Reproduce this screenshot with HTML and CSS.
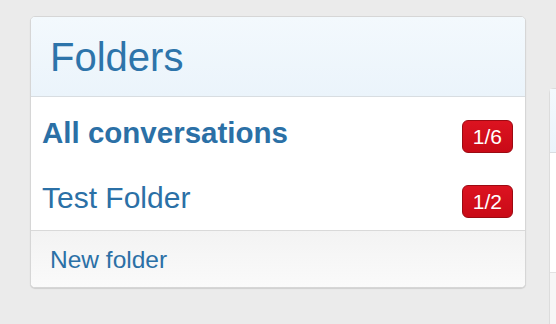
FILE: index.html
```html
<!DOCTYPE html>
<html>
<head>
<meta charset="utf-8">
<link rel="stylesheet" href="styles.css">
</head>
<body>
<div class="page">
  <div class="card">
    <div class="card-head"><h2 class="title">Folders</h2></div>
    <ul class="folders">
      <li class="folder"><span class="name bold">All conversations</span><span class="badge">1/6</span></li>
      <li class="folder"><span class="name">Test Folder</span><span class="badge">1/2</span></li>
    </ul>
    <div class="card-foot"><a class="new">New folder</a></div>
  </div>
  <div class="side">
    <div class="side-head"></div>
    <div class="side-body"></div>
    <div class="side-foot"></div>
  </div>
</div>
</body>
</html>
```

FILE: styles.css
```css
html, body {
  margin: 0;
  padding: 0;
  background: #ebebeb;
  overflow: hidden;
  font-family: "Liberation Sans", Arial, sans-serif;
}
.page {
  display: flex;
  align-items: flex-start;
  gap: 23px;
  padding: 16px 0 0 30px;
  width: 526px;
}
.card {
  width: 494px;
  flex: none;
  background: #fff;
  border: 1px solid #d6d6d6;
  border-radius: 5px;
  box-shadow: 0 1px 1px rgba(0,0,0,0.12);
  overflow: hidden;
}
.card-head {
  background: linear-gradient(#f3f9fd, #ebf4fb);
  border-bottom: 1px solid #d8dde1;
  padding: 16px 19px 15px;
}
.title {
  margin: 0;
  font-weight: normal;
  font-size: 40px;
  line-height: 48px;
  color: #2d74aa;
}
.folders {
  list-style: none;
  margin: 0;
  padding: 3px 0 0;
}
.folder {
  display: flex;
  align-items: center;
  justify-content: space-between;
  padding: 16px 12px 15px 11px;
}
.name {
  font-size: 30px;
  line-height: 34px;
  color: #2b70a6;
}
.name.bold {
  font-weight: bold;
  font-size: 29.5px;
}
.badge {
  margin: 3px 0 -3px;
  background: linear-gradient(#dc1320, #c90a17);
  border: 1px solid #9c0a12;
  border-radius: 6px;
  color: #fff;
  font-size: 21px;
  line-height: 31px;
  padding: 0 10px;
}
.card-foot {
  border-top: 1px solid #d9d9d9;
  background: linear-gradient(#f3f3f3, #fafafa);
  padding: 15px 19px 13px;
}
.new {
  font-size: 24.5px;
  line-height: 28px;
  color: #2b70a6;
}
.side {
  margin-top: 72px;
  flex: 1;
  min-width: 0;
  background: #fff;
  border: 1px solid #dcdcdc;
  border-right: none;
  border-radius: 5px 0 0 0;
}
.side-head {
  height: 63px;
  background: linear-gradient(#f3f9fd, #ebf4fb);
  border-bottom: 1px solid #d8dde1;
}
.side-body {
  height: 119px;
  border-bottom: 1px solid #e2e2e2;
}
.side-foot {
  height: 60px;
  background: #f6f6f6;
}
```
